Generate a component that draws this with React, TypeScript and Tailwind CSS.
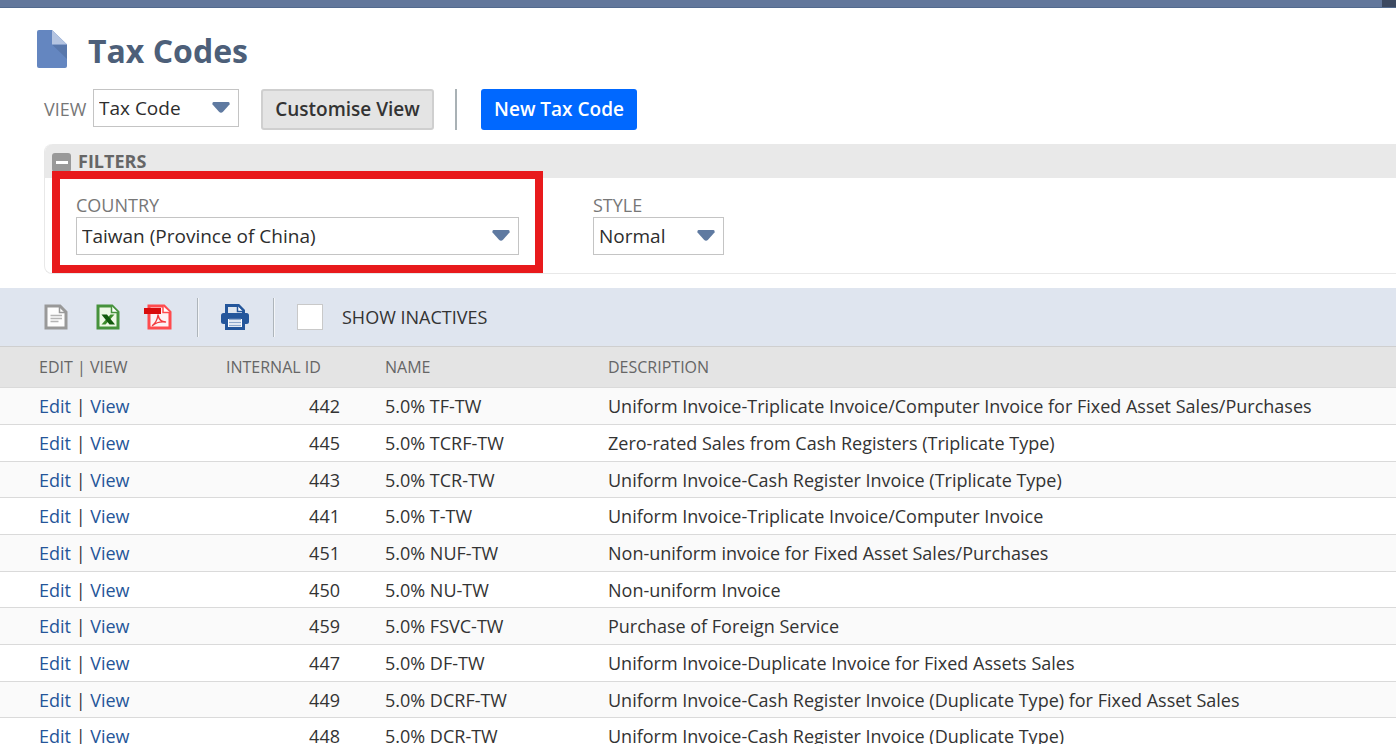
import React from 'react';

type TaxCode = { id: number; name: string; description: string };

const taxCodes: TaxCode[] = [
  { id: 442, name: '5.0% TF-TW', description: 'Uniform Invoice-Triplicate Invoice/Computer Invoice for Fixed Asset Sales/Purchases' },
  { id: 445, name: '5.0% TCRF-TW', description: 'Zero-rated Sales from Cash Registers (Triplicate Type)' },
  { id: 443, name: '5.0% TCR-TW', description: 'Uniform Invoice-Cash Register Invoice (Triplicate Type)' },
  { id: 441, name: '5.0% T-TW', description: 'Uniform Invoice-Triplicate Invoice/Computer Invoice' },
  { id: 451, name: '5.0% NUF-TW', description: 'Non-uniform invoice for Fixed Asset Sales/Purchases' },
  { id: 450, name: '5.0% NU-TW', description: 'Non-uniform Invoice' },
  { id: 459, name: '5.0% FSVC-TW', description: 'Purchase of Foreign Service' },
  { id: 447, name: '5.0% DF-TW', description: 'Uniform Invoice-Duplicate Invoice for Fixed Assets Sales' },
  { id: 449, name: '5.0% DCRF-TW', description: 'Uniform Invoice-Cash Register Invoice (Duplicate Type) for Fixed Asset Sales' },
  { id: 448, name: '5.0% DCR-TW', description: 'Uniform Invoice-Cash Register Invoice (Duplicate Type)' },
];

function PageIcon() {
  return (
    <svg width="30" height="38" viewBox="0 0 30 38" aria-hidden="true">
      <path d="M2 0H15L30 14.5V36a2 2 0 0 1-2 2H2a2 2 0 0 1-2-2V2a2 2 0 0 1 2-2Z" fill="#6486c0" />
      <path d="M15 14.5H30V29Z" fill="#5877ab" />
      <path d="M15 0 30 14.5H15Z" fill="#b4c4e1" />
    </svg>
  );
}

function TextFileIcon() {
  return (
    <svg width="24" height="26" viewBox="0 0 24 26" aria-hidden="true">
      <path d="M2 2H16L22 8V24H2Z" fill="#fdfdfd" stroke="#999" strokeWidth="3" />
      <path d="M15.5 2V8.500H22" fill="none" stroke="#999" strokeWidth="1.500" />
      <path d="M6.500 11.500H18M6.500 14.500H18M6.500 17.500H14.500" stroke="#b5b5b5" strokeWidth="1.300" />
    </svg>
  );
}

function ExcelIcon() {
  return (
    <svg width="24" height="26" viewBox="0 0 24 26" aria-hidden="true">
      <path d="M2 2H16L22 8V24H2Z" fill="#eef8e6" stroke="#46923c" strokeWidth="3" />
      <path d="M15.500 2V8.500H22" fill="#fff" stroke="#46923c" strokeWidth="1.500" />
      <path d="M14.500 10.500H18.500L9.500 20.500H5.500Z" fill="#3c8b2b" />
      <path d="M5.500 10.500H11L19 20.500H13.500Z" fill="#12590d" />
    </svg>
  );
}

function PdfIcon() {
  return (
    <svg width="28" height="26" viewBox="0 0 28 26" aria-hidden="true">
      <path d="M5 2H20L26 8V24H5Z" fill="#fdf3f5" stroke="#ff4b4e" strokeWidth="3" />
      <path d="M19 2V8.500H26" fill="#fff" stroke="#ff4b4e" strokeWidth="1.500" />
      <rect x="0" y="4" width="17" height="6" fill="#d80c0c" />
      <path d="M14 11C13.500 15 11.500 19 8.500 21.500C12 18.500 17 17.500 21.500 18C18 18 15 15.500 14 11Z" fill="none" stroke="#f23a3d" strokeWidth="1.400" strokeLinejoin="round" />
    </svg>
  );
}

function PrintIcon() {
  return (
    <svg width="28" height="26" viewBox="0 0 28 26" aria-hidden="true">
      <path d="M5.500 11V1.500H17.500L22.500 6.500V11" fill="#dfe6ef" stroke="#24569b" strokeWidth="3" />
      <path d="M16.500 2V7.500H22" fill="#fff" stroke="#24569b" strokeWidth="1.500" />
      <rect x="0" y="9" width="28" height="11" rx="2.500" fill="#24569b" />
      <path d="M5.500 13.500H22.500V24.500H5.500Z" fill="#fff" stroke="#24569b" strokeWidth="3" />
      <path d="M8 15.500H20M8 18.500H20M8 21.500H20" stroke="#8fa9cc" strokeWidth="1.300" />
    </svg>
  );
}

function Dropdown({ id, value, className }: { id: string; value: string; className: string }) {
  return (
    <div className={`relative ${className}`}>
      <select
        id={id}
        defaultValue={value}
        className="block h-[38px] w-full appearance-none border border-[#c4c4c4] bg-white pl-[5px] pr-8 text-[19px] text-[#2d2d2d] outline-none"
      >
        <option>{value}</option>
      </select>
      <svg className="pointer-events-none absolute top-[13px] right-[9px]" width="18" height="11" viewBox="0 0 18 11" aria-hidden="true">
        <path d="M1.500 0H16.500Q18 .5 17.500 2.500L11 9.800Q9 11.500 7 9.800L.5 2.500Q0 .5 1.500 0Z" fill="#5f7aa1" />
      </svg>
    </div>
  );
}

export default function App() {
  return (
    <div className="h-screen overflow-hidden bg-white font-['Open_Sans',sans-serif] text-[18px] text-[#333]">
      <div className="flex h-2 border-b border-[#526a8e] bg-[#62779b]">
        <div className="ml-auto w-[14px] bg-[#3c4961]" />
      </div>

      <header className="flex h-[81px] items-center gap-[21px] pl-[37px]">
        <PageIcon />
        <h1 className="mt-1 text-[32px] leading-10 font-bold text-[#4d5f79]">Tax Codes</h1>
      </header>

      <div className="flex items-start pl-11">
        <label htmlFor="view" className="w-[49px] pt-2 text-[18px] leading-6 text-[#777]">VIEW</label>
        <Dropdown id="view" value="Tax Code" className="w-[146px]" />
        <button className="ml-[22px] h-[41px] w-[173px] rounded-[3px] border-2 border-[#cfcfcf] bg-[#e4e4e4] text-[19px] font-semibold whitespace-nowrap text-[#333]">
          Customise View
        </button>
        <div className="ml-[21px] h-[41px] w-0.5 bg-[#a9b1b5]" />
        <button className="ml-6 h-[41px] w-[156px] rounded-[3px] bg-[#0068ff] text-[19px] font-semibold whitespace-nowrap text-white">
          New Tax Code
        </button>
      </div>

      <section className="mt-[14px] ml-11 rounded-l-lg border-b border-l border-[#e8e8e8]">
        <h2 className="flex h-[34px] items-center gap-[7px] rounded-tl-lg bg-[#e9e9e9] pl-[7px] text-[18px] font-bold text-[#666]">
          <button aria-label="Collapse filters" className="mt-[3px] flex size-[19px] items-center justify-center rounded-[3px] bg-[#999]">
            <span className="h-[3px] w-3 bg-white" />
          </button>
          FILTERS
        </h2>
        <div className="flex gap-[74px] pt-[15px] pb-[18px] pl-[31px]">
          <div className="relative w-[443px]">
            <label htmlFor="country" className="block h-6 text-[18px] leading-6 text-[#777]">COUNTRY</label>
            <Dropdown id="country" value="Taiwan (Province of China)" className="w-full" />
            <div className="pointer-events-none absolute -top-[22px] -right-6 -bottom-[18px] -left-6 border-8 border-[#e81a1c]" />
          </div>
          <div className="w-[131px]">
            <label htmlFor="style" className="block h-6 text-[18px] leading-6 text-[#777]">STYLE</label>
            <Dropdown id="style" value="Normal" className="w-full" />
          </div>
        </div>
      </section>

      <div className="mt-[14px] flex h-[58px] items-center bg-[#dfe5ef] pl-11">
        <button aria-label="Export as CSV"><TextFileIcon /></button>
        <button aria-label="Export as Excel" className="ml-7"><ExcelIcon /></button>
        <button aria-label="Export as PDF" className="ml-6"><PdfIcon /></button>
        <div className="ml-[25px] h-[39px] w-0.5 border-r border-[#f3f5f8] bg-[#aeb5bb]" />
        <button aria-label="Print" className="ml-[22px]"><PrintIcon /></button>
        <div className="ml-6 h-[39px] w-0.5 border-r border-[#f3f5f8] bg-[#aeb5bb]" />
        <input id="inactives" type="checkbox" className="ml-[22px] size-[26px] appearance-none border border-[#c9c9c9] bg-white" />
        <label htmlFor="inactives" className="ml-[19px] text-[18px] text-[#333]">SHOW INACTIVES</label>
      </div>

      <table className="w-full table-fixed border-separate border-spacing-0 text-left whitespace-nowrap">
        <colgroup>
          <col className="w-[190px]" />
          <col className="w-[150px]" />
          <col className="w-[268px]" />
          <col />
        </colgroup>
        <thead>
          <tr className="h-[42px] bg-[#e4e4e4] text-[16px] text-[#666] [&>th]:border-y [&>th]:border-t-[#cfcfcf] [&>th]:border-b-[#dadada] [&>th]:p-0 [&>th]:font-normal">
            <th scope="col"><span className="pl-[39px]">EDIT | VIEW</span></th>
            <th scope="col"><span className="pl-9">INTERNAL ID</span></th>
            <th scope="col"><span className="pl-[45px]">NAME</span></th>
            <th scope="col">DESCRIPTION</th>
          </tr>
        </thead>
        <tbody>
          {taxCodes.map((code) => (
            <tr
              key={code.id}
              className="h-[37px] bg-white leading-6 odd:bg-[#fafafa] nth-[3n]:h-9 [&>td]:border-b [&>td]:border-[#dadada] [&>td]:p-0"
            >
              <td>
                <span className="pl-[39px]">
                  <a href="#edit" className="text-[#255599]">Edit</a> | <a href="#view" className="text-[#255599]">View</a>
                </span>
              </td>
              <td className="text-right">{code.id}</td>
              <td><span className="pl-[45px]">{code.name}</span></td>
              <td>{code.description}</td>
            </tr>
          ))}
        </tbody>
      </table>
    </div>
  );
}
